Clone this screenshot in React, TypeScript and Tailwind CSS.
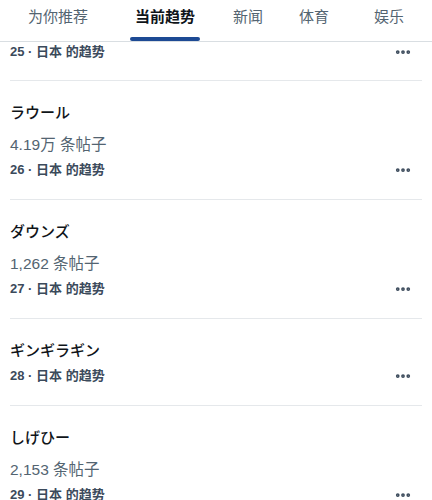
import { MoreHorizontal } from "lucide-react";

const tabs = [
  { label: "为你推荐", w: "w-[116px]" },
  { label: "当前趋势", w: "w-[98px]", active: true },
  { label: "新闻", w: "w-[68px]" },
  { label: "体育", w: "w-[64px]" },
  { label: "娱乐", w: "w-[86px]" },
];

const trends = [
  { rank: 26, title: "ラウール", count: "4.19万 条帖子" },
  { rank: 27, title: "ダウンズ", count: "1,262 条帖子" },
  { rank: 28, title: "ギンギラギン" },
  { rank: 29, title: "しげひー", count: "2,153 条帖子" },
];

function Meta({ rank }: { rank: number }) {
  return (
    <div className="flex items-center justify-between">
      <span className="text-[13px] font-bold leading-[18px] text-[#3b4a5b]">
        {rank} · 日本 的趋势
      </span>
      <MoreHorizontal className="mr-[10px] h-[18px] w-[18px] text-[#3b4a5b]" strokeWidth={3} />
    </div>
  );
}

export default function App() {
  return (
    <div
      className="h-[500px] w-[432px] overflow-hidden bg-white"
      style={{ fontFamily: '"Liberation Sans", "Noto Sans CJK SC", sans-serif' }}
    >
      <div className="flex h-[42px] border-b border-[#d9dee2]">
        {tabs.map((t) => (
          <div key={t.label} className={`${t.w} flex shrink-0 flex-col items-center`}>
            <span
              className={`mt-[5px] flex-1 text-[15px] leading-[24px] ${
                t.active ? "font-bold text-[#0f1419]" : "text-[#536471]"
              }`}
            >
              {t.label}
            </span>
            {t.active && <div className="h-[4px] w-[70px] rounded-full bg-[#1d4a94]" />}
          </div>
        ))}
      </div>

      <div className="px-[10px]">
        <div className="border-b border-[#e5e8eb] pb-[19px] pt-[1px]">
          <Meta rank={25} />
        </div>
        {trends.map((t) => (
          <div key={t.rank} className="border-b border-[#e5e8eb] pb-[20px] pt-[21px]">
            <div className="text-[15px] font-medium leading-[22px] text-[#0f1419]">{t.title}</div>
            {t.count && (
              <div className="mt-[10px] text-[15.5px] leading-[22px] text-[#536471]">{t.count}</div>
            )}
            <div className="mt-[5px]">
              <Meta rank={t.rank} />
            </div>
          </div>
        ))}
      </div>
    </div>
  );
}
